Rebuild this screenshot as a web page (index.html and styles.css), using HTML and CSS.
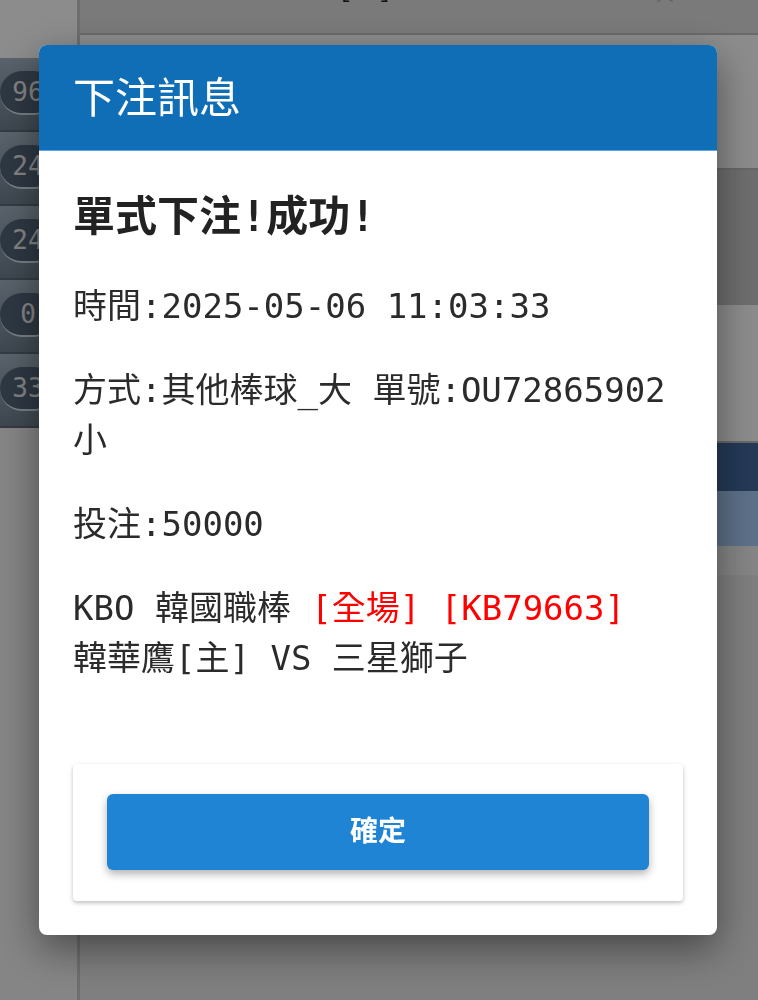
FILE: index.html
```html
<!DOCTYPE html>
<html lang="zh-Hant">
<head>
    <meta charset="UTF-8">
    <meta name="viewport" content="width=device-width, initial-scale=1.0">
    <title>下注訊息</title>
    <link rel="stylesheet" href="styles.css">
</head>
<body>

    <div class="page">
        <aside class="side">
            <div class="side-top"></div>
            <ul class="odds">
                <li><span class="pill">96</span></li>
                <li><span class="pill">24</span></li>
                <li><span class="pill">24</span></li>
                <li><span class="pill">0</span></li>
                <li><span class="pill">33</span></li>
            </ul>
        </aside>
        <main class="main">
            <header class="topbar">
                <span class="topbar-title">[主]</span>
                <svg class="star" width="26" height="26" viewBox="0 0 24 24">
                    <path d="M12 2l3 6.5 7 .8-5.2 4.8 1.4 7L12 17.6 5.8 21.1l1.4-7L2 9.3l7-.8z" fill="none" stroke="#b5b5b5" stroke-width="1.5"/>
                </svg>
            </header>
            <section class="band band-light"></section>
            <section class="band band-mid"></section>
            <section class="band band-light band-tall"></section>
            <div class="tab tab-navy"></div>
            <div class="tab tab-slate"></div>
            <div class="tab tab-foot"></div>
        </main>
    </div>

    <div class="overlay">
        <div class="dialog">
            <div class="dialog-head">下注訊息</div>
            <div class="dialog-body">
                <h2 class="result">單式下注!成功!</h2>
                <p>時間:2025-05-06 11:03:33</p>
                <p>方式:其他棒球_大 單號:OU72865902小</p>
                <p>投注:50000</p>
                <p class="match">KBO 韓國職棒 <span class="red">[全場] [KB79663]</span><br>韓華鷹[主] VS 三星獅子</p>
                <div class="actions">
                    <button class="btn-ok">確定</button>
                </div>
            </div>
        </div>
    </div>

</body>
</html>
```

FILE: styles.css
```css
* {
    box-sizing: border-box;
}
body {
    margin: 0;
    font-family: "Noto Sans CJK TC", sans-serif;
    background: #e7e7e7;
    height: 100vh;
    overflow: hidden;
}

/* page behind the dialog */
.page {
    display: grid;
    grid-template-columns: 80px 1fr;
    height: 100%;
}
.side {
    background: #f2f2f2;
    border-right: 3px solid #c9c9c9;
}
.side-top {
    height: 58px;
    background: #fff;
}
.odds {
    list-style: none;
    margin: 0;
    padding: 0;
}
.odds li {
    height: 74px;
    padding-bottom: 2px;
    display: flex;
    align-items: center;
    background: linear-gradient(#a4b4c4, #718191);
    border-bottom: 2px solid #5d6b7a;
}
.pill {
    width: 56px;
    height: 44px;
    border-radius: 22px;
    background: #54667a;
    border-bottom: 2px solid #dae9f7;
    color: #f0f0f0;
    font-family: "DejaVu Sans Mono", monospace;
    font-size: 26px;
    line-height: 42px;
    text-align: center;
}
.main {
    display: flex;
    flex-direction: column;
}
.topbar {
    height: 35px;
    background: #dedede;
    border-bottom: 2px solid #c1c1c1;
    display: flex;
    justify-content: space-between;
    align-items: flex-start;
    padding: 0 80px 0 260px;
    overflow: hidden;
}
.topbar-title {
    margin-top: -38px;
    font-size: 30px;
    color: #222;
}
.star {
    margin-top: -22px;
}
.band {
    height: 135px;
    background: #c8c8c8;
}
.band-light {
    background: #fff;
    border-bottom: 2px solid #bdbdbd;
}
.band-tall {
    height: 138px;
}
.tab {
    height: 48px;
}
.tab-navy {
    background: #43699e;
}
.tab-slate {
    height: 55px;
    background: #a9cdf9;
}
.tab-foot {
    height: 29px;
    background: #f2f2f2;
}

/* dialog */
.overlay {
    position: fixed;
    inset: 0;
    background: rgba(0, 0, 0, 0.45);
    padding: 45px 0 0 39px;
}
.dialog {
    width: 678px;
    background: #fff;
    border-radius: 8px;
    overflow: hidden;
    box-shadow: 0 14px 40px rgba(0, 0, 0, 0.45);
}
.dialog-head {
    height: 106px;
    padding: 0 34px;
    background: #106eb6;
    border-bottom: 1px solid #5aa3e4;
    color: #fff;
    font-size: 42px;
    line-height: 100px;
}
.dialog-body {
    padding: 36px 34px 34px;
    color: #2b2b2b;
    font-family: "DejaVu Sans Mono", "Noto Sans CJK TC", monospace;
    font-size: 34px;
    line-height: 50px;
}
.result {
    margin: 0 0 34px;
    font-size: 42px;
    line-height: 60px;
    font-weight: bold;
    color: #222;
}
.dialog-body p {
    margin: 0 0 34px;
}
.dialog-body p.match {
    margin-bottom: 0;
}
.red {
    color: #f00;
}
.actions {
    margin-top: 81px;
    padding: 30px 34px 31px;
    background: #fff;
    border-radius: 4px;
    box-shadow: 0 2px 4px rgba(0, 0, 0, 0.25);
}
.btn-ok {
    display: block;
    width: 100%;
    height: 76px;
    padding: 0 0 6px;
    border: none;
    border-radius: 6px;
    background: #2084d4;
    color: #fff;
    font-family: "Noto Sans CJK TC", sans-serif;
    font-size: 28px;
    font-weight: bold;
    line-height: 60px;
    box-shadow: 0 4px 8px rgba(0, 0, 0, 0.3);
    cursor: pointer;
}
```
